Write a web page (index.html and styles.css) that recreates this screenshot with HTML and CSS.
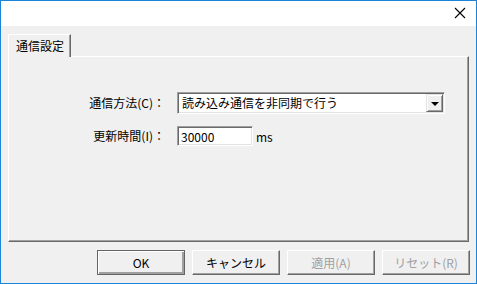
FILE: index.html
```html
<!DOCTYPE html>
<html lang="ja">
<head>
  <meta charset="UTF-8">
  <title>通信設定</title>
  <link rel="stylesheet" href="styles.css">
</head>
<body>
  <div class="window">
    <div class="titlebar">
      <svg class="close" width="12" height="12" viewBox="0 0 12 12">
        <path d="M1 1 L11 11 M11 1 L1 11" stroke="#000" stroke-width="1.1" fill="none"/>
      </svg>
    </div>

    <div class="body">
      <div class="tabs">
        <div class="tab">通信設定</div>
      </div>
      <div class="panel">
        <div class="form">
          <label class="label" for="method">通信方法(C)：</label>
          <div class="combo" id="method">
            <span class="combo-text">読み込み通信を非同期で行う</span>
            <span class="combo-btn"><span class="arrow"></span></span>
          </div>

          <label class="label" for="interval">更新時間(I)：</label>
          <div class="field-row">
            <input class="textbox" id="interval" type="text" value="30000">
            <span class="unit">ms</span>
          </div>
        </div>
      </div>

      <div class="buttons">
        <button class="btn default">OK</button>
        <button class="btn">キャンセル</button>
        <button class="btn" disabled>適用(A)</button>
        <button class="btn" disabled>リセット(R)</button>
      </div>
    </div>
  </div>
</body>
</html>
```

FILE: styles.css
```css
* {
  box-sizing: border-box;
  margin: 0;
  padding: 0;
}

body {
  font-family: "Noto Sans CJK JP", "Noto Sans", sans-serif;
  font-size: 12px;
  color: #000;
  background: #fff;
}

.window {
  width: 477px;
  height: 284px;
  border: 1px solid #1b84d8;
  background: #f0f0f0;
  display: flex;
  flex-direction: column;
}

.titlebar {
  height: 25px;
  background: #fff;
  display: flex;
  justify-content: flex-end;
  align-items: center;
  padding-right: 10px;
}

.close {
  margin-top: -1px;
}

.body {
  padding: 8px 7px 0 7px;
  display: flex;
  flex-direction: column;
}

/* tab strip */
.tabs {
  display: flex;
  height: 22px;
}

.tab {
  width: 63px;
  height: 23px;
  padding: 2px 0 0 7px;
  border-top: 1px solid #fff;
  border-left: 1px solid #fff;
  border-right: 1px solid #696969;
  box-shadow: inset -1px 0 0 #a0a0a0;
  background: #f0f0f0;
  position: relative;
  z-index: 1;
  line-height: 18px;
}

.panel {
  width: 461px;
  height: 186px;
  border-top: 1px solid #fff;
  border-left: 1px solid #fff;
  border-right: 1px solid #696969;
  border-bottom: 1px solid #696969;
  box-shadow: inset -1px -1px 0 #a0a0a0;
  padding: 35px 0 0 0;
}

/* form grid */
.form {
  display: grid;
  grid-template-columns: 156px auto;
  column-gap: 12px;
  row-gap: 12px;
  align-items: center;
}

.label {
  text-align: right;
  line-height: 16px;
}

.combo {
  width: 268px;
  height: 22px;
  display: flex;
  align-items: center;
  background: #fff;
  border-top: 1px solid #a0a0a0;
  border-left: 1px solid #a0a0a0;
  border-right: 1px solid #fff;
  border-bottom: 1px solid #fff;
  box-shadow: inset 1px 1px 0 #696969, inset -1px -1px 0 #e3e3e3;
  padding: 0 1px 0 4px;
}

.combo-text {
  flex: 1;
  line-height: 18px;
}

.combo-btn {
  width: 17px;
  height: 18px;
  background: #f0f0f0;
  border-top: 1px solid #e3e3e3;
  border-left: 1px solid #e3e3e3;
  border-right: 1px solid #696969;
  border-bottom: 1px solid #696969;
  box-shadow: inset 1px 1px 0 #fff, inset -1px -1px 0 #a0a0a0;
  display: flex;
  justify-content: center;
  align-items: center;
}

.arrow {
  width: 0;
  height: 0;
  border-left: 4px solid transparent;
  border-right: 4px solid transparent;
  border-top: 4px solid #000;
  margin-top: 1px;
}

.field-row {
  display: flex;
  align-items: center;
  gap: 3px;
}

.textbox {
  width: 76px;
  height: 20px;
  font: inherit;
  background: #fff;
  border-top: 1px solid #a0a0a0;
  border-left: 1px solid #a0a0a0;
  border-right: 1px solid #fff;
  border-bottom: 1px solid #fff;
  box-shadow: inset 1px 1px 0 #696969, inset -1px -1px 0 #e3e3e3;
  padding: 0 3px;
  outline: none;
}

.unit {
  line-height: 16px;
  padding-top: 2px;
}

/* dialog buttons */
.buttons {
  display: flex;
  justify-content: flex-end;
  gap: 7px;
  padding-top: 8px;
  margin-right: -1px;
}

.btn {
  width: 88px;
  height: 25px;
  font: inherit;
  color: #000;
  background: #f0f0f0;
  border-top: 1px solid #fff;
  border-left: 1px solid #fff;
  border-right: 1px solid #696969;
  border-bottom: 1px solid #696969;
  box-shadow: inset -1px -1px 0 #a0a0a0;
}

.btn.default {
  border: 1px solid #646464;
  box-shadow: inset 1px 1px 0 #fff, inset -2px -2px 0 #a0a0a0;
}

.btn:disabled {
  color: #a0a0a0;
}
```
